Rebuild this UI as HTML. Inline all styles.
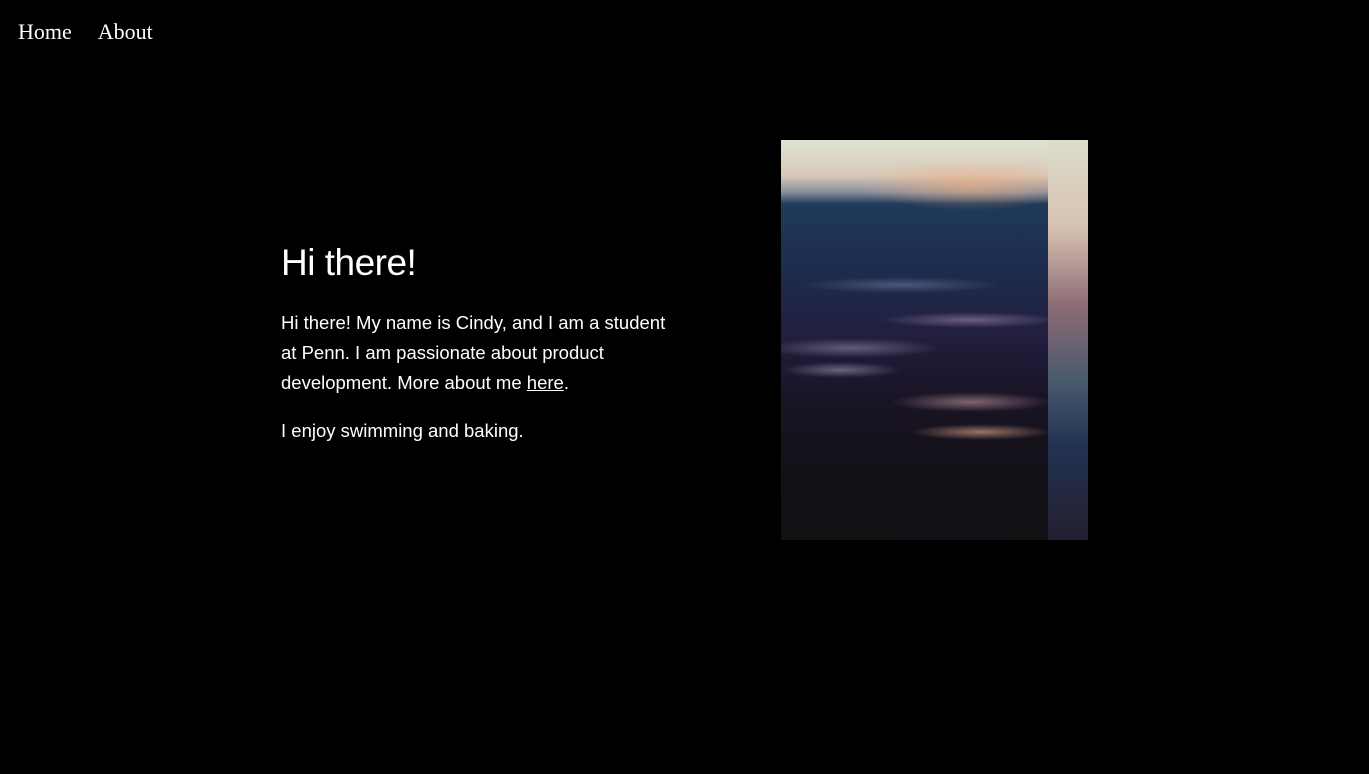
<!DOCTYPE html>
<html><head><meta charset="utf-8"><style>
html,body{margin:0;background:#000;width:1369px;height:774px;overflow:hidden}
.nav{position:absolute;top:19px;left:18px;font-family:"Liberation Serif",serif;font-size:22px;color:#fff}
.nav span{margin-right:26px}
.txt{position:absolute;left:281px;top:240px;width:400px;font-family:"Liberation Sans",sans-serif;color:#fff}
h1{margin:0 0 22px;font-size:37px;font-weight:500;letter-spacing:-0.5px;line-height:46px}
p{margin:0 0 18px;font-size:18.5px;line-height:30px}
a{color:#fff}
.img{position:absolute;left:781px;top:140px;width:267px;height:400px;
background:
radial-gradient(ellipse 70px 8px at 200px 292px,rgba(240,180,150,.6),transparent),
radial-gradient(ellipse 60px 8px at 60px 230px,rgba(200,190,220,.45),transparent),
radial-gradient(ellipse 80px 10px at 190px 262px,rgba(230,180,190,.5),transparent),
radial-gradient(ellipse 90px 10px at 70px 208px,rgba(190,190,220,.4),transparent),
radial-gradient(ellipse 90px 8px at 190px 180px,rgba(200,170,200,.45),transparent),
radial-gradient(ellipse 100px 8px at 120px 145px,rgba(160,170,210,.35),transparent),
radial-gradient(ellipse 110px 25px at 190px 45px,rgba(240,170,120,.6),transparent),
linear-gradient(180deg,#dfe3d4 0%,#d8c8b8 9%,#8a90a0 13%,#1f3a5a 16%,#1e2e50 30%,#221f40 48%,#191424 65%,#131016 85%,#111013 100%)}
.strip{position:absolute;left:1048px;top:140px;width:40px;height:400px;
background:linear-gradient(180deg,#dcdccc 0%,#d6c2b0 22%,#8a6a74 42%,#4a5a6e 60%,#223452 76%,#241e30 100%)}
</style></head><body>
<div class="nav"><span>Home</span><span>About</span></div>
<div class="txt">
<h1>Hi there!</h1>
<p>Hi there! My name is Cindy, and I am a student at Penn. I am passionate about product development. More about me <a href="#">here</a>.</p>
<p>I enjoy swimming and baking.</p>
</div>
<div class="img"></div><div class="strip"></div>
</body></html>
